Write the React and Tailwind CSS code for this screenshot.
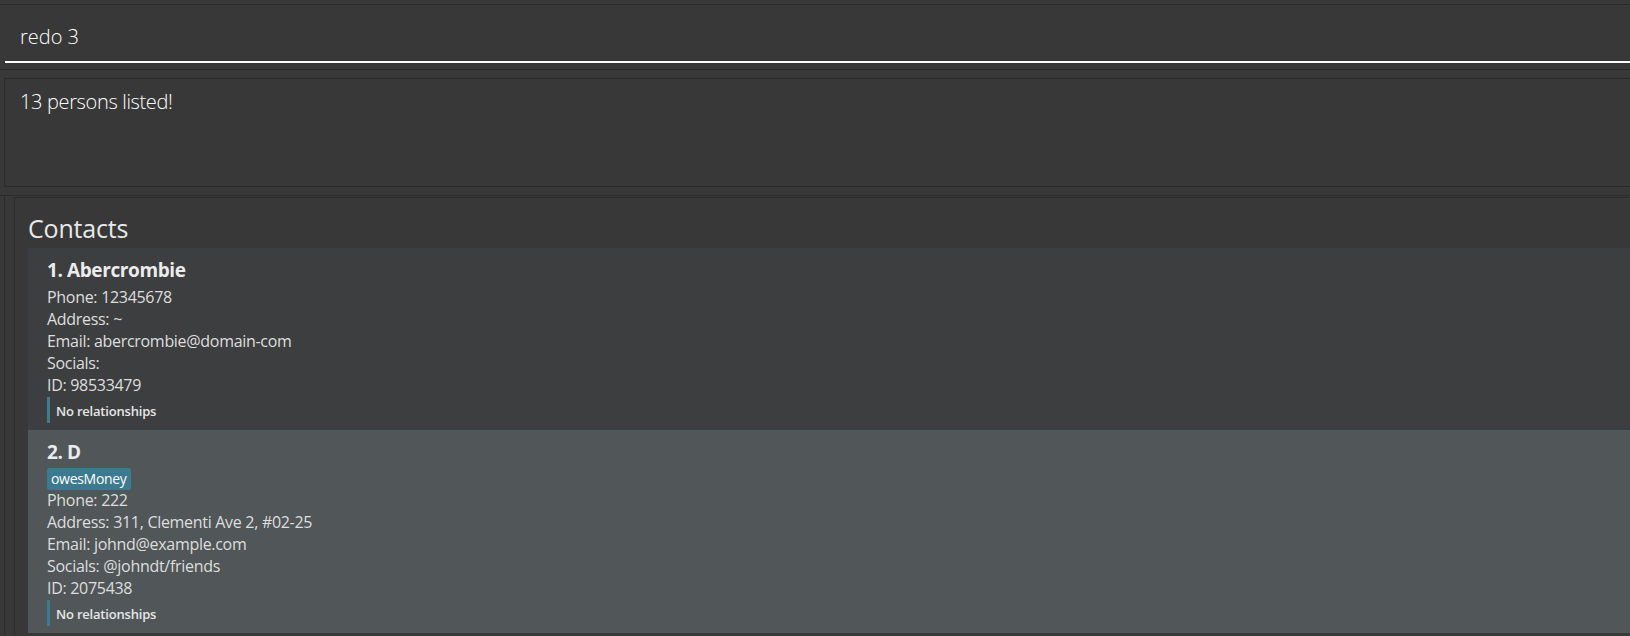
import React from "react";

const contacts = [
  {
    idx: 1,
    name: "Abercrombie",
    tags: [],
    phone: "12345678",
    address: "~",
    email: "abercrombie@domain-com",
    socials: "",
    id: "98533479",
    bg: "bg-[#3d3e40]",
  },
  {
    idx: 2,
    name: "D",
    tags: ["owesMoney"],
    phone: "222",
    address: "311, Clementi Ave 2, #02-25",
    email: "johnd@example.com",
    socials: "@johndt/friends",
    id: "2075438",
    bg: "bg-[#515658]",
  },
];

function Card({ c }) {
  return (
    <div className={`${c.bg} pl-[19px] pt-[9px] pb-[7px]`}>
      <div className="text-[19px] leading-[26px] font-bold tracking-[-0.4px] text-[#ececec]">
        {c.idx}. {c.name}
      </div>
      {c.tags.length > 0 && (
        <div className="mt-[3px] h-[21px] flex gap-1">
          {c.tags.map((t) => (
            <span
              key={t}
              className="h-[22px] px-[4px] rounded-[2px] bg-[#3d7a90] text-white text-[14px] leading-[22px] tracking-[-0.3px]"
            >
              {t}
            </span>
          ))}
        </div>
      )}
      <div
        className={`${c.tags.length ? "mt-0" : "mt-[3px]"} text-[16px] leading-[22px] tracking-[-0.3px] text-[#dedede]`}
      >
        <div>Phone: {c.phone}</div>
        <div>Address: {c.address}</div>
        <div>Email: {c.email}</div>
        <div>Socials: {c.socials}</div>
        <div>ID: {c.id}</div>
      </div>
      <div className="mt-[1px] h-[26px] border-l-[3px] border-[#3e7b91] pl-[6px] pt-[5px]">
        <div className="text-[13px] leading-[18px] font-semibold tracking-[-0.2px] text-[#e6e6e6]">
          No relationships
        </div>
      </div>
    </div>
  );
}

export default function App() {
  return (
    <div
      className="w-[1630px] h-[636px] overflow-hidden bg-[#383838] flex flex-col"
      style={{ fontFamily: '"Open Sans", "Noto Sans", sans-serif' }}
    >
      {/* command box */}
      <div className="mt-[4px] h-[66px] border-y border-[#2b2b2b] pl-[5px] shrink-0">
        <div className="pt-[18px] pb-[10px] pl-[15px] border-b-2 border-white">
          <div className="text-[20px] leading-[28px] font-light text-white">redo 3</div>
        </div>
      </div>
      {/* result box */}
      <div className="mt-[8px] ml-[4px] h-[109px] border-l border-y border-[#2b2b2b] pl-[15px] pt-[9px] shrink-0">
        <div className="text-[20px] leading-[28px] font-light tracking-[-0.35px] text-white">
          13 persons listed!
        </div>
      </div>
      {/* list panel */}
      <div className="mt-[8px] border-t border-[#2b2b2b] flex-1 flex">
        <div className="ml-[4px] border-l border-[#2b2b2b] pl-[9px] pt-[1px] flex-1 flex">
          <div className="flex-1 border-l border-t border-[#2b2b2b] pl-[13px]">
            <div className="mt-[13px] mb-[3px] text-[25px] leading-[34px] tracking-[-0.2px] text-[#e8e8e8]">
              Contacts
            </div>
            <div className="flex flex-col">
              {contacts.map((c) => (
                <Card key={c.idx} c={c} />
              ))}
            </div>
          </div>
        </div>
      </div>
    </div>
  );
}
